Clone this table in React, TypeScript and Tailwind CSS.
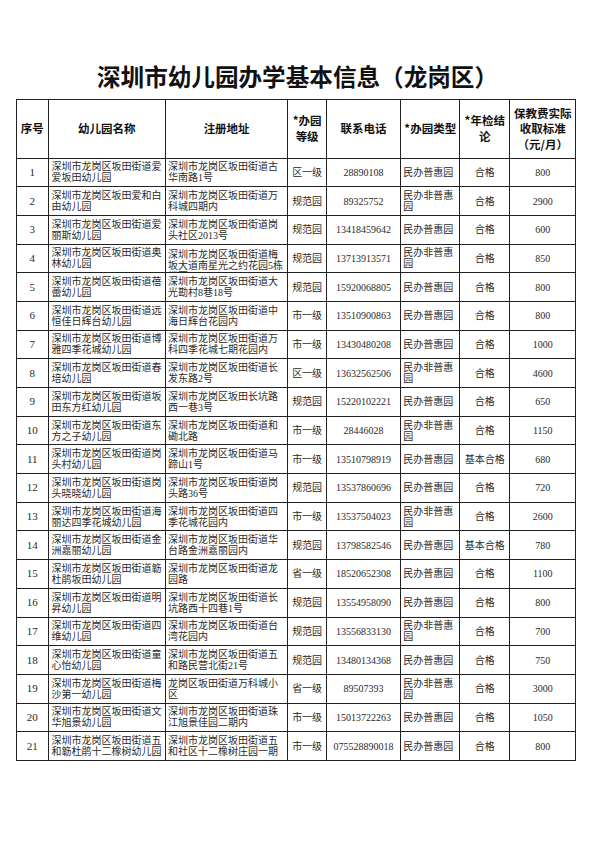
import React from "react";

type Row = [string, string, string, string, string, string, string, string];

const rows: Row[] = [
  ["1", "深圳市龙岗区坂田街道爱爱坂田幼儿园", "深圳市龙岗区坂田街道古华南路1号", "区一级", "28890108", "民办普惠园", "合格", "800"],
  ["2", "深圳市龙岗区坂田爱和白由幼儿园", "深圳市龙岗区坂田街道万科城四期内", "规范园", "89325752", "民办非普惠园", "合格", "2900"],
  ["3", "深圳市龙岗区坂田街道爱丽斯幼儿园", "深圳市龙岗区坂田街道岗头社区2013号", "规范园", "13418459642", "民办普惠园", "合格", "600"],
  ["4", "深圳市龙岗区坂田街道奥林幼儿园", "深圳市龙岗区坂田街道梅坂大道南星光之约花园5栋楼园", "规范园", "13713913571", "民办非普惠园", "合格", "850"],
  ["5", "深圳市龙岗区坂田街道蓓蕾幼儿园", "深圳市龙岗区坂田街道大光勘村8巷18号", "规范园", "15920068805", "民办普惠园", "合格", "800"],
  ["6", "深圳市龙岗区坂田街道远恒佳日辉台幼儿园", "深圳市龙岗区坂田街道中海日辉台花园内", "市一级", "13510900863", "民办普惠园", "合格", "800"],
  ["7", "深圳市龙岗区坂田街道博雅四季花城幼儿园", "深圳市龙岗区坂田街道万科四季花城七期花园内", "市一级", "13430480208", "民办普惠园", "合格", "1000"],
  ["8", "深圳市龙岗区坂田街道春培幼儿园", "深圳市龙岗区坂田街道长发东路2号", "区一级", "13632562506", "民办非普惠园", "合格", "4600"],
  ["9", "深圳市龙岗区坂田街道坂田东方红幼儿园", "深圳市龙岗区坂田长坑路西一巷3号", "规范园", "15220102221", "民办普惠园", "合格", "650"],
  ["10", "深圳市龙岗区坂田街道东方之子幼儿园", "深圳市龙岗区坂田街道和磡北路", "市一级", "28446028", "民办非普惠园", "合格", "1150"],
  ["11", "深圳市龙岗区坂田街道岗头村幼儿园", "深圳市龙岗区坂田街道马蹄山1号", "市一级", "13510798919", "民办普惠园", "基本合格", "680"],
  ["12", "深圳市龙岗区坂田街道岗头晓晓幼儿园", "深圳市龙岗区坂田街道岗头路36号", "规范园", "13537860696", "民办普惠园", "合格", "720"],
  ["13", "深圳市龙岗区坂田街道海丽达四季花城幼儿园", "深圳市龙岗区坂田街道四季花城花园内", "市一级", "13537504023", "民办非普惠园", "合格", "2600"],
  ["14", "深圳市龙岗区坂田街道金洲嘉丽幼儿园", "深圳市龙岗区坂田街道华台路金洲嘉丽园内", "规范园", "13798582546", "民办普惠园", "基本合格", "780"],
  ["15", "深圳市龙岗区坂田街道簕杜鹃坂田幼儿园", "深圳市龙岗区坂田街道龙园路", "省一级", "18520652308", "民办普惠园", "合格", "1100"],
  ["16", "深圳市龙岗区坂田街道明昇幼儿园", "深圳市龙岗区坂田街道长坑路西十四巷1号", "规范园", "13554958090", "民办普惠园", "合格", "800"],
  ["17", "深圳市龙岗区坂田街道四维幼儿园", "深圳市龙岗区坂田街道台湾花园内", "规范园", "13556833130", "民办非普惠园", "合格", "700"],
  ["18", "深圳市龙岗区坂田街道童心怡幼儿园", "深圳市龙岗区坂田街道五和路民营北街21号", "规范园", "13480134368", "民办普惠园", "合格", "750"],
  ["19", "深圳市龙岗区坂田街道梅沙第一幼儿园", "龙岗区坂田街道万科城小区", "省一级", "89507393", "民办非普惠园", "合格", "3000"],
  ["20", "深圳市龙岗区坂田街道文华旭景幼儿园", "深圳市龙岗区坂田街道珠江旭景佳园二期内", "市一级", "15013722263", "民办普惠园", "合格", "1050"],
  ["21", "深圳市龙岗区坂田街道五和簕杜鹃十二橡树幼儿园", "深圳市龙岗区坂田街道五和社区十二橡树庄园一期", "市一级", "075528890018", "民办普惠园", "合格", "800"],
];

const cell = "border-r border-b border-[#222] overflow-hidden";
const head =
  "border-r border-b border-[#222] flex items-center justify-center text-center font-bold text-[11.5px] leading-[15.5px] text-[#111] [font-family:'Noto_Sans_CJK_SC',sans-serif]";
const body =
  "text-[10px] leading-[11px] text-[#2a2a2a] [font-family:'Liberation_Serif','Noto_Sans_CJK_SC',serif]";

export default function App() {
  return (
    <div className="w-[595px] h-[841px] bg-white pt-[62px]">
      <h1 className="text-center text-[23.6px] leading-[28px] font-bold text-[#111] [font-family:'Noto_Sans_CJK_SC',sans-serif]">
        深圳市幼儿园办学基本信息（龙岗区）
      </h1>
      <div className="ml-[16px] mt-[9px] w-[560.3px] grid grid-cols-[31.6px_117.4px_122.3px_38.7px_74.3px_59px_50px_66px] grid-rows-[58.5px_repeat(21,28.7px)] border-l border-t border-[#222]">
        <div className={head}>序号</div>
        <div className={head}>幼儿园名称</div>
        <div className={head}>注册地址</div>
        <div className={head}>
          *办园
          <br />
          等级
        </div>
        <div className={head}>联系电话</div>
        <div className={head}>*办园类型</div>
        <div className={head}>
          *年检结
          <br />
          论
        </div>
        <div className={head}>
          保教费实际
          <br />
          收取标准
          <br />
          （元/月）
        </div>
        {rows.map((r) => (
          <React.Fragment key={r[0]}>
            <div className={`${cell} ${body} flex items-center justify-center text-[11px]`}>{r[0]}</div>
            <div className={`${cell} ${body} flex items-center pl-[3px] pr-[1px]`}>
              <span>{r[1]}</span>
            </div>
            <div
              className={`${cell} ${body} flex pl-[2px] pr-[1px] ${
                r[0] === "4" ? "items-start pt-[4px]" : "items-center"
              }`}
            >
              <span>{r[2]}</span>
            </div>
            <div className={`${cell} ${body} flex items-center justify-center`}>{r[3]}</div>
            <div className={`${cell} ${body} flex items-center justify-center`}>{r[4]}</div>
            <div className={`${cell} ${body} flex items-center pl-[2px] pr-[1px]`}>
              <span>{r[5]}</span>
            </div>
            <div className={`${cell} ${body} flex items-center justify-center`}>{r[6]}</div>
            <div className={`${cell} ${body} flex items-center justify-center`}>{r[7]}</div>
          </React.Fragment>
        ))}
      </div>
    </div>
  );
}
